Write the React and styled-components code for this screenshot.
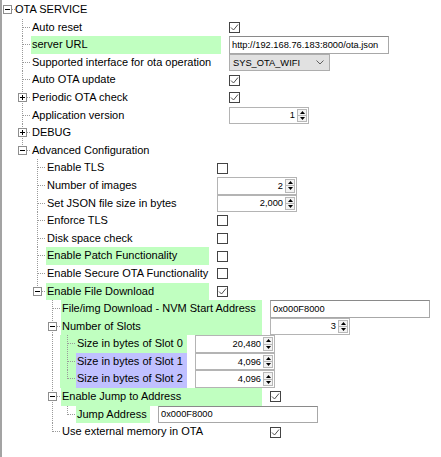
import React from "react";
import styled, { createGlobalStyle } from "styled-components";

const GlobalStyle = createGlobalStyle`
  html, body { margin: 0; padding: 0; background: #fff; }
  body { font-family: "Liberation Sans", Arial, sans-serif; color: #000; }
`;

const GREEN = "#c0ffc0";
const LAVENDER = "#c0c0ff";

// value column x for each group of siblings
const OTA = 229;
const ADV = 217;
const FILE = 270;
const SLOT = 195;
const JUMP = 158;

const rows = [
  { lv: 1, pipes: [], conn: "tee", label: "Auto reset", col: OTA, value: { kind: "check", on: true } },
  { lv: 1, pipes: [], conn: "tee", label: "server URL", col: OTA, hl: GREEN, value: { kind: "text", text: "http://192.168.76.183:8000/ota.json" } },
  { lv: 1, pipes: [], conn: "tee", label: "Supported interface for ota operation", col: OTA, value: { kind: "select", text: "SYS_OTA_WIFI" } },
  { lv: 1, pipes: [], conn: "tee", label: "Auto OTA update", col: OTA, value: { kind: "check", on: true } },
  { lv: 1, pipes: [], conn: "tee", node: "closed", label: "Periodic OTA check", col: OTA, value: { kind: "check", on: true } },
  { lv: 1, pipes: [], conn: "tee", label: "Application version", col: OTA, value: { kind: "spin", text: "1" } },
  { lv: 1, pipes: [], conn: "tee", node: "closed", label: "DEBUG" },
  { lv: 1, pipes: [], conn: "elbow", node: "open", label: "Advanced Configuration" },
  { lv: 2, pipes: [0], conn: "tee", label: "Enable TLS", col: ADV, value: { kind: "check" } },
  { lv: 2, pipes: [0], conn: "tee", label: "Number of images", col: ADV, value: { kind: "spin", text: "2" } },
  { lv: 2, pipes: [0], conn: "tee", label: "Set JSON file size in bytes", col: ADV, value: { kind: "spin", text: "2,000" } },
  { lv: 2, pipes: [0], conn: "tee", label: "Enforce TLS", col: ADV, value: { kind: "check" } },
  { lv: 2, pipes: [0], conn: "tee", label: "Disk space check", col: ADV, value: { kind: "check" } },
  { lv: 2, pipes: [0], conn: "tee", label: "Enable Patch Functionality", col: ADV, hl: GREEN, value: { kind: "check" } },
  { lv: 2, pipes: [0], conn: "tee", label: "Enable Secure OTA Functionality", col: ADV, value: { kind: "check" } },
  { lv: 2, pipes: [0], conn: "elbow", node: "open", label: "Enable File Download", col: ADV, hl: GREEN, value: { kind: "check", on: true } },
  { lv: 3, pipes: [0, 0], conn: "tee", label: "File/img Download - NVM Start Address", col: FILE, hl: GREEN, value: { kind: "text", text: "0x000F8000" } },
  { lv: 3, pipes: [0, 0], conn: "tee", node: "open", label: "Number of Slots", col: FILE, hl: GREEN, value: { kind: "spin", text: "3" } },
  { lv: 4, pipes: [0, 0, 1], conn: "tee", tint: true, label: "Size in bytes of Slot 0", col: SLOT, hl: GREEN, value: { kind: "spin", text: "20,480" } },
  { lv: 4, pipes: [0, 0, 1], conn: "tee", tint: true, label: "Size in bytes of Slot 1", col: SLOT, hl: LAVENDER, value: { kind: "spin", text: "4,096" } },
  { lv: 4, pipes: [0, 0, 1], conn: "elbow", tint: true, label: "Size in bytes of Slot 2", col: SLOT, hl: LAVENDER, value: { kind: "spin", text: "4,096" } },
  { lv: 3, pipes: [0, 0], conn: "tee", node: "open", label: "Enable Jump to Address", col: FILE, hl: GREEN, value: { kind: "check", on: true } },
  { lv: 4, pipes: [0, 0, 1], conn: "elbow", label: "Jump Address", col: JUMP, hl: GREEN, value: { kind: "text", text: "0x000F8000" } },
  { lv: 3, pipes: [0, 0], conn: "elbow", label: "Use external memory in OTA", col: FILE, value: { kind: "check", on: true } },
];

function Connector({ conn }) {
  return (
    <LineSvg>
      <line x1="7.5" y1="0" x2="7.5" y2={conn === "elbow" ? "50%" : "100%"} />
      <line x1="8" y1="50%" x2="16" y2="50%" />
    </LineSvg>
  );
}

function Expander({ open, $root }) {
  return (
    <ExpBox $root={$root}>
      <svg width="7" height="7">
        <line x1="1" y1="3.5" x2="6" y2="3.5" stroke="#000" />
        {!open && <line x1="3.5" y1="1" x2="3.5" y2="6" stroke="#000" />}
      </svg>
    </ExpBox>
  );
}

function Value({ v }) {
  if (v.kind === "check") {
    return (
      <Check>
        {v.on && (
          <svg width="9" height="9">
            <polyline points="1,4.5 3.5,7 8,1.5" fill="none" stroke="#505050" />
          </svg>
        )}
      </Check>
    );
  }
  if (v.kind === "text") return <TextField>{v.text}</TextField>;
  if (v.kind === "select") {
    return (
      <Select>
        <span>{v.text}</span>
        <svg width="8" height="5">
          <polyline points="0.5,0.5 4,4 7.5,0.5" fill="none" stroke="#606060" />
        </svg>
      </Select>
    );
  }
  return (
    <Spinner>
      <SpinText>{v.text}</SpinText>
      <SpinButtons>
        <SpinBtn>
          <svg width="5" height="3"><polygon points="0,3 2.5,0 5,3" fill="#000" /></svg>
        </SpinBtn>
        <SpinBtn>
          <svg width="5" height="3"><polygon points="0,0 2.5,3 5,0" fill="#000" /></svg>
        </SpinBtn>
      </SpinButtons>
    </Spinner>
  );
}

function TreeRow({ row }) {
  const start = 15 * row.lv + 16;
  const width = row.col ? row.col - 8 - start : undefined;
  return (
    <Row>
      <Lead />
      {row.pipes.map((p, i) => (
        <Guide key={i}>
          {p ? (
            <LineSvg>
              <line x1="7.5" y1="0" x2="7.5" y2="100%" />
            </LineSvg>
          ) : null}
        </Guide>
      ))}
      <Guide $own $tint={row.tint}>
        <Connector conn={row.conn} />
        {row.node && <Expander open={row.node === "open"} />}
      </Guide>
      <Label $w={width} $bg={row.hl}>{row.label}</Label>
      {row.value && (
        <ValueCell>
          <Value v={row.value} />
        </ValueCell>
      )}
    </Row>
  );
}

export default function App() {
  return (
    <>
      <GlobalStyle />
      <Panel>
        <Row>
          <RootCell>
            <LineSvg>
              <line x1="10" y1="50%" x2="13" y2="50%" />
            </LineSvg>
            <Expander open $root />
          </RootCell>
          <Label>OTA SERVICE</Label>
        </Row>
        {rows.map((r, i) => (
          <TreeRow key={i} row={r} />
        ))}
      </Panel>
    </>
  );
}

const Panel = styled.div`
  height: 457px;
  box-sizing: border-box;
  border-left: 2px solid #a3a3a3;
  padding-top: 1px;
  display: flex;
  flex-direction: column;
  overflow: hidden;
`;

const Row = styled.div`
  display: flex;
  height: 17.6px;
  flex: none;
  align-items: stretch;
`;

const Lead = styled.div`
  width: 13px;
  flex: none;
`;

const cellGrid = `
  display: grid;
  grid-template-rows: 100%;
  grid-template-columns: 100%;
  min-height: 0;
`;

const RootCell = styled.div`
  ${cellGrid}
  width: 12px;
  flex: none;
`;

const Guide = styled.div`
  ${cellGrid}
  width: ${(p) => (p.$own ? 16 : 15)}px;
  flex: none;
  background: ${(p) => (p.$tint ? GREEN : "transparent")};
`;

const LineSvg = styled.svg`
  grid-area: 1 / 1;
  display: block;
  width: 100%;
  height: 100%;
  min-height: 0;
  overflow: visible;
  stroke: #9a9a9a;
  stroke-dasharray: 1 1;
  shape-rendering: crispEdges;
`;

const ExpBox = styled.span`
  grid-area: 1 / 1;
  align-self: center;
  justify-self: start;
  margin-left: ${(p) => (p.$root ? 1 : 3)}px;
  width: 9px;
  height: 9px;
  box-sizing: border-box;
  border: 1px solid #8e8e8e;
  background: #fff;
  display: flex;
  svg { display: block; shape-rendering: crispEdges; }
`;

const Label = styled.div`
  flex: none;
  width: ${(p) => (p.$w ? `${p.$w}px` : "auto")};
  background: ${(p) => p.$bg || "transparent"};
  padding-left: 1px;
  box-sizing: border-box;
  font-size: 11px;
  line-height: 17.6px;
  white-space: nowrap;
`;

const ValueCell = styled.div`
  margin-left: 8px;
  display: flex;
  align-items: center;
`;

const Check = styled.span`
  width: 11px;
  height: 11px;
  box-sizing: border-box;
  border: 1px solid #444;
  background: #fff;
  display: flex;
  svg { display: block; }
`;

const fieldText = `
  font-family: "Liberation Sans", Arial, sans-serif;
  font-size: 9.3px;
  color: #000;
`;

const TextField = styled.div`
  ${fieldText}
  width: 160px;
  height: 100%;
  box-sizing: border-box;
  border: 1px solid #a8a8a8;
  border-top-color: #8a8a8a;
  background: #fff;
  padding-left: 2px;
  display: flex;
  align-items: center;
`;

const Select = styled.div`
  ${fieldText}
  width: 101px;
  height: 100%;
  box-sizing: border-box;
  border: 1px solid #adadad;
  background: #e1e1e1;
  padding: 0 5px 0 3px;
  display: flex;
  align-items: center;
  justify-content: space-between;
`;

const Spinner = styled.div`
  ${fieldText}
  width: 80px;
  height: 100%;
  box-sizing: border-box;
  border: 1px solid #b4b4b4;
  background: #fff;
  display: flex;
`;

const SpinText = styled.div`
  flex: 1;
  text-align: right;
  padding-right: 2px;
  display: flex;
  align-items: center;
  justify-content: flex-end;
`;

const SpinButtons = styled.div`
  width: 10px;
  padding: 1px 1px 1px 0;
  display: flex;
  flex-direction: column;
`;

const SpinBtn = styled.div`
  flex: 1;
  border: 1px solid #b8b8b8;
  background: #f3f3f3;
  display: flex;
  align-items: center;
  justify-content: center;
  & + & { border-top: none; }
  svg { display: block; }
`;
